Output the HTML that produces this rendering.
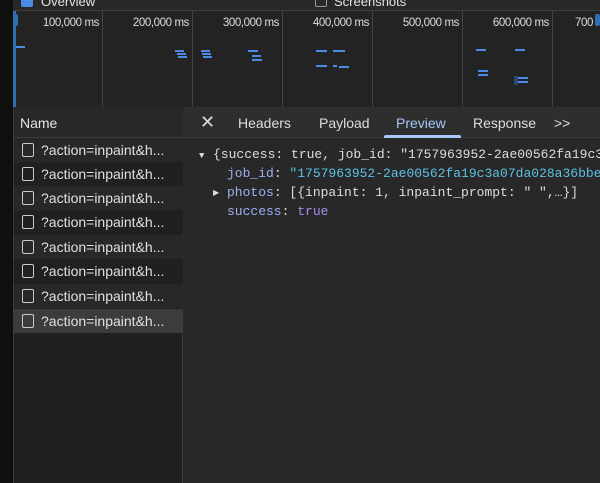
<!DOCTYPE html>
<html><head><style>
*{margin:0;padding:0;box-sizing:border-box}
body{width:600px;height:483px;background:#282828;position:relative;overflow:hidden;font-family:"Liberation Sans",sans-serif;color:#e3e3e3}
.abs{position:absolute}
.strip{left:0;top:0;width:13px;height:483px;background:#0f0f0f}
.top{left:13px;top:0;width:587px;height:11px;background:#282828;border-bottom:1px solid #3d3d3d}
.ov{left:13px;top:11px;width:587px;height:96px;background:#232323}
.vl{top:11px;width:1px;height:96px;background:#444}
.tl{top:17px;font-size:11.5px;letter-spacing:-0.4px;color:#ddd;text-align:right}
.bar{height:2px;background:#4a8be8}
.name{left:13px;top:107px;width:170px;height:376px;background:#1f1f1f;border-left:1px solid #3a3a3a;border-right:1px solid #3a3a3a}
.nh{left:14px;top:107px;width:169px;height:31px;background:#282828;border-bottom:1px solid #3a3a3a;font-size:14px;padding:8px 0 0 6px}
.row{left:14px;width:169px;height:24px;font-size:14px;padding:4px 0 0 27px;white-space:nowrap;color:#e0e0e0}
.fi{position:absolute;left:8px;top:5px;width:12px;height:14px;border:1.5px solid #ccc;border-radius:2px}
.tabs{left:183px;top:107px;width:417px;height:31px;background:#2e2e2e;border-bottom:1px solid #3a3a3a;font-size:14px;color:#ddd}
.tabs span{position:absolute;top:8px}
.code{font-family:"Liberation Mono",monospace;font-size:13px;position:absolute;white-space:nowrap;color:#ddd}
.k{color:#9ab0f5}.s{color:#5cc2e5}.b{color:#a88cf0}
</style></head><body>
<div class="abs strip"></div>
<div class="abs top"><div class="abs" style="left:8px;top:-5px;width:12px;height:12px;background:#4a8be8;border-radius:2px"></div><span class="abs" style="left:28px;top:-6px;font-size:13px">Overview</span>
<div class="abs" style="left:302px;top:-5px;width:12px;height:12px;border:1px solid #999;border-radius:2px"></div><span class="abs" style="left:321px;top:-6px;font-size:13px">Screenshots</span></div>
<div class="abs ov"></div>
<div class="abs" style="left:13px;top:11px;width:3px;height:96px;background:#2d6fb0"></div>
<div class="abs vl" style="left:102px"></div><div class="abs vl" style="left:192px"></div><div class="abs vl" style="left:282px"></div><div class="abs vl" style="left:372px"></div><div class="abs vl" style="left:462px"></div><div class="abs vl" style="left:552px"></div>
<div class="abs tl" style="left:20px;width:79px">100,000 ms</div>
<div class="abs tl" style="left:108px;width:81px">200,000 ms</div>
<div class="abs tl" style="left:198px;width:81px">300,000 ms</div>
<div class="abs tl" style="left:288px;width:81px">400,000 ms</div>
<div class="abs tl" style="left:378px;width:81px">500,000 ms</div>
<div class="abs tl" style="left:468px;width:81px">600,000 ms</div>
<div class="abs tl" style="left:575px">700</div>
<div class="abs" style="left:595px;top:14px;width:5px;height:12px;background:#2d6fb0;border-radius:2px"></div>
<div class="abs" style="left:13px;top:14px;width:5px;height:12px;background:#2d6fb0;border-radius:2px"></div>
<div class="abs bar" style="left:16px;top:46px;width:9px"></div>
<div class="abs bar" style="left:175px;top:50px;width:9px"></div><div class="abs bar" style="left:177px;top:53px;width:9px"></div><div class="abs bar" style="left:178px;top:56px;width:9px"></div>
<div class="abs bar" style="left:201px;top:50px;width:9px"></div><div class="abs bar" style="left:202px;top:53px;width:9px"></div><div class="abs bar" style="left:203px;top:56px;width:9px"></div>
<div class="abs bar" style="left:248px;top:50px;width:10px"></div><div class="abs bar" style="left:252px;top:55px;width:9px"></div><div class="abs bar" style="left:252px;top:59px;width:10px"></div>
<div class="abs bar" style="left:316px;top:50px;width:11px"></div><div class="abs bar" style="left:333px;top:50px;width:12px"></div>
<div class="abs bar" style="left:316px;top:65px;width:11px"></div><div class="abs bar" style="left:333px;top:65px;width:4px"></div><div class="abs bar" style="left:339px;top:66px;width:10px"></div>
<div class="abs bar" style="left:476px;top:49px;width:10px"></div><div class="abs bar" style="left:515px;top:49px;width:10px"></div>
<div class="abs bar" style="left:478px;top:70px;width:10px"></div><div class="abs bar" style="left:478px;top:74px;width:10px"></div>
<div class="abs" style="left:514px;top:76px;width:4px;height:9px;background:#264a75"></div>
<div class="abs bar" style="left:518px;top:77px;width:10px"></div><div class="abs bar" style="left:518px;top:81px;width:10px"></div>
<div class="abs name"></div>
<div class="abs nh">Name</div>
<div class="abs row" style="top:138px;background:#282828"><i class="fi"></i>?action=inpaint&amp;h...</div>
<div class="abs row" style="top:162px;background:#202020"><i class="fi"></i>?action=inpaint&amp;h...</div>
<div class="abs row" style="top:186px;background:#282828"><i class="fi"></i>?action=inpaint&amp;h...</div>
<div class="abs row" style="top:210px;background:#202020"><i class="fi"></i>?action=inpaint&amp;h...</div>
<div class="abs row" style="top:235px;background:#282828"><i class="fi"></i>?action=inpaint&amp;h...</div>
<div class="abs row" style="top:259px;background:#202020"><i class="fi"></i>?action=inpaint&amp;h...</div>
<div class="abs row" style="top:284px;background:#282828"><i class="fi"></i>?action=inpaint&amp;h...</div>
<div class="abs row" style="top:309px;background:#3c3c3c"><i class="fi"></i>?action=inpaint&amp;h...</div>
<div class="abs tabs">
<span style="left:17px;top:5px;font-size:18px">✕</span>
<span style="left:55px">Headers</span>
<span style="left:136px">Payload</span>
<span style="left:213px;color:#a8c7fa">Preview</span>
<div class="abs" style="left:201px;top:28px;width:77px;height:3px;background:#a8c7fa;border-radius:2px 2px 0 0"></div>
<span style="left:290px">Response</span>
<span style="left:371px">&gt;&gt;</span>
</div>
<div class="code" style="left:199px;top:147px"><span style="font-size:9px;display:inline-block;width:14px">▼</span>{success: true, job_id: "1757963952-2ae00562fa19c3a07</div>
<div class="code" style="left:227px;top:166px"><span class="k">job_id</span>: <span class="s">"1757963952-2ae00562fa19c3a07da028a36bbe5</span></div>
<div class="code" style="left:213px;top:185px"><span style="font-size:8px;position:absolute;left:0;top:3px">▶</span><span style="margin-left:14px" class="k">photos</span>: [{inpaint: 1, inpaint_prompt: " ",…}]</div>
<div class="code" style="left:227px;top:204px"><span class="k">success</span>: <span class="b">true</span></div>
</body></html>
